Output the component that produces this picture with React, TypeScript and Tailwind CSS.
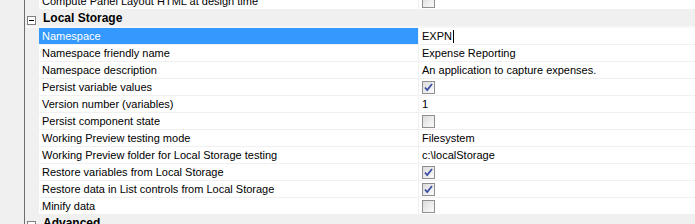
type Row =
  | { kind: 'cat'; name: string }
  | { kind: 'prop'; name: string; value?: string; check?: boolean; selected?: boolean; editing?: boolean };

const ROWS: Row[] = [
  { kind: 'prop', name: 'Compute Panel Layout HTML at design time', check: false },
  { kind: 'cat', name: 'Local Storage' },
  { kind: 'prop', name: 'Namespace', value: 'EXPN', selected: true, editing: true },
  { kind: 'prop', name: 'Namespace friendly name', value: 'Expense Reporting' },
  { kind: 'prop', name: 'Namespace description', value: 'An application to capture expenses.' },
  { kind: 'prop', name: 'Persist variable values', check: true },
  { kind: 'prop', name: 'Version number (variables)', value: '1' },
  { kind: 'prop', name: 'Persist component state', check: false },
  { kind: 'prop', name: 'Working Preview testing mode', value: 'Filesystem' },
  { kind: 'prop', name: 'Working Preview folder for Local Storage testing', value: 'c:\\localStorage' },
  { kind: 'prop', name: 'Restore variables from Local Storage', check: true },
  { kind: 'prop', name: 'Restore data in List controls from Local Storage', check: true },
  { kind: 'prop', name: 'Minify data', check: false },
  { kind: 'cat', name: 'Advanced' },
];

function CheckBox({ checked }: { checked: boolean }) {
  return (
    <div className="w-[13px] h-[13px] border border-[#8f8f8f] bg-gradient-to-br from-[#dcdcdc] to-[#fbfbfb] flex items-center justify-center">
      {checked && (
        <svg width="9" height="9" viewBox="0 0 9 9">
          <path d="M1 4.5 L3.2 7 L8 1" fill="none" stroke="#3b4fa3" strokeWidth="1.8" />
        </svg>
      )}
    </div>
  );
}

function MinusBox() {
  return (
    <div className="w-[9px] h-[9px] border border-[#808080] bg-white flex items-center justify-center">
      <div className="w-[5px] h-px bg-black" />
    </div>
  );
}

export default function App() {
  return (
    <div
      className="w-[695px] h-[224px] overflow-hidden bg-white flex text-[11px] text-black"
      style={{ fontFamily: '"Liberation Sans", Arial, sans-serif' }}
    >
      <div className="w-[25px] shrink-0 bg-[#f0f0f0] border-r border-[#6d6d6d]" />
      <div className="flex-1 flex flex-col -mt-[7px]">
        {ROWS.map((r, i) =>
          r.kind === 'cat' ? (
            <div key={i} className="flex h-[18px] shrink-0 bg-[#f0f0f0] border-b-2 border-[#f7f7f7]">
              <div className="w-[14px] shrink-0 pl-[2px] pt-[6px]">
                <MinusBox />
              </div>
              <div className="pl-[4px] font-bold leading-[16px] text-[12px]">{r.name}</div>
            </div>
          ) : (
            <div key={i} className="flex h-[17px] shrink-0 border-b border-[#f0f0f0]">
              <div className="w-[14px] shrink-0 bg-[#f0f0f0]" />
              <div
                className={`w-[380px] shrink-0 pl-[3px] leading-[16px] whitespace-nowrap overflow-hidden border-r border-[#f0f0f0] ${
                  r.selected ? 'bg-[#3399ff] text-white' : ''
                }`}
              >
                {r.name}
              </div>
              <div className="flex-1 flex items-center pl-[3px] leading-[16px] whitespace-nowrap">
                {r.check !== undefined ? (
                  <CheckBox checked={r.check} />
                ) : (
                  <>
                    <span>{r.value}</span>
                    {r.editing && <span className="w-px h-[13px] bg-black ml-px" />}
                  </>
                )}
              </div>
            </div>
          )
        )}
      </div>
    </div>
  );
}
